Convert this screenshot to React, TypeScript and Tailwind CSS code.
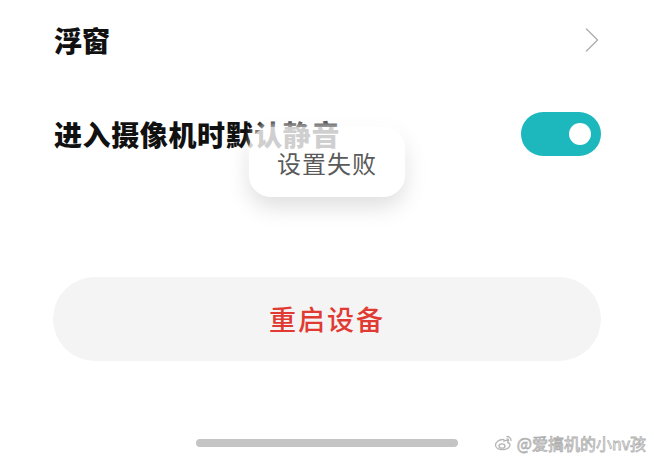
import { ChevronRight } from 'lucide-react';

const cjk = "font-['Noto_Sans_CJK_SC','Noto_Sans',sans-serif]";

// little weibo mark next to the credit line
function WeiboMark() {
  return (
    <svg width="20" height="18" viewBox="0 0 20 18" fill="none" stroke="#b5b5b5" strokeWidth="1.3">
      <path d="M8.5 5.5c-3.5 0-7 2.6-7 5.6 0 2.9 3.2 4.6 6.9 4.6 4.4 0 7.6-2.4 7.6-4.8 0-1.6-1.5-2.2-2.3-2.4.5-1.2.3-2.4-1.6-2.1-1 .2-1.9.6-1.9.6s.5-1.7-1.7-1.5z" />
      <ellipse cx="8" cy="12" rx="3" ry="2.2" />
      <path d="M13 2.5c2.2 0 4 1.8 4 4" strokeLinecap="round" />
      <path d="M13 5c.9 0 1.6.7 1.6 1.6" strokeLinecap="round" />
    </svg>
  );
}

export default function App() {
  return (
    <div className={`relative w-[654px] h-[460px] overflow-hidden bg-white px-[53px] ${cjk}`}>
      {/* floating window row */}
      <div className="flex h-[80px] items-center justify-between">
        <span className="text-[28px] font-black text-[#111] leading-none pl-px">浮窗</span>
        <ChevronRight size={44} strokeWidth={0.8} className="text-[#b0b0b0] -mr-[13px]" />
      </div>

      {/* mute on enter row */}
      <div className="flex h-[108px] items-center justify-between">
        <span className="text-[28px] font-black text-[#111] leading-none pl-px tracking-[0.6px]">
          进入摄像机时默认静音
        </span>
        <div className="flex h-[44px] w-[80px] items-center justify-end rounded-full bg-[#1db8bd] pr-[10px]">
          <div className="h-[22px] w-[22px] rounded-full bg-white" />
        </div>
      </div>

      {/* restart button */}
      <button className="mt-[89px] flex h-[84px] w-full items-center justify-center rounded-full bg-[#f4f4f4]">
        <span className="text-[27px] font-medium text-[#e03a33] tracking-[2px]">重启设备</span>
      </button>

      {/* home indicator */}
      <div className="mt-[78px] flex justify-center">
        <div className="h-[8px] w-[262px] rounded-full bg-[#c4c4c4]" />
      </div>

      {/* toast */}
      <div className="absolute left-[249px] top-[127px] flex h-[70px] w-[156px] items-center justify-center rounded-[22px] bg-white/80 shadow-[0_-5px_6px_rgba(255,255,255,0.6),0_10px_22px_rgba(0,0,0,0.13)]">
        <span className="mt-[1px] text-[24px] text-[#5a5a5a] tracking-[1px]">设置失败</span>
      </div>

      {/* credit */}
      <div className="absolute right-[8px] top-[431px] flex items-center gap-[3px]">
        <WeiboMark />
        <span className="text-[16px] text-white [-webkit-text-stroke:0.8px_#b0b0b0]">@爱搞机的小nv孩</span>
      </div>
    </div>
  );
}
